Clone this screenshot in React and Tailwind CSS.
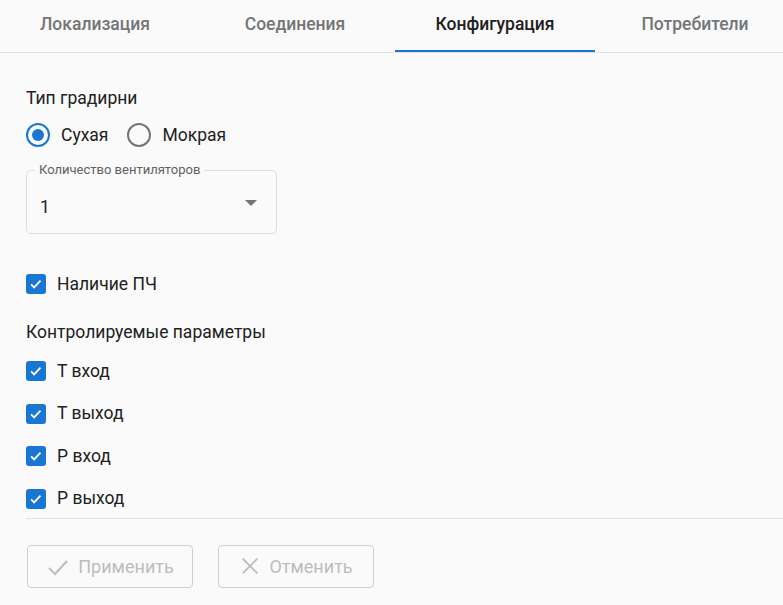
import React, { useState } from 'react';

const tabs = ['Локализация', 'Соединения', 'Конфигурация', 'Потребители'];
const params = ['T вход', 'T выход', 'P вход', 'P выход'];

function CheckBox({ checked, onChange, label }) {
  return (
    <label className="flex items-center h-[22px] cursor-pointer">
      <span
        onClick={onChange}
        className={
          'w-[20px] h-[20px] rounded-[3px] flex items-center justify-center ' +
          (checked ? 'bg-[#1976d2]' : 'border-2 border-[#757575]')
        }
      >
        {checked && (
          <svg viewBox="0 0 24 24" className="w-[18px] h-[18px]" fill="none" stroke="white" strokeWidth="2.4">
            <path d="M5.5 12.5l4 4 8.5-9" />
          </svg>
        )}
      </span>
      <span className="ml-[11px] text-[17.5px] text-[#212121]">{label}</span>
    </label>
  );
}

function Radio({ checked, onClick, label }) {
  return (
    <label className="flex items-center cursor-pointer" onClick={onClick}>
      <span
        className={
          'w-[24px] h-[24px] rounded-full border-2 flex items-center justify-center ' +
          (checked ? 'border-[#1976d2]' : 'border-[#757575]')
        }
      >
        {checked && <span className="w-[12px] h-[12px] rounded-full bg-[#1976d2]" />}
      </span>
      <span className="ml-[11px] text-[17.5px] text-[#212121]">{label}</span>
    </label>
  );
}

export default function App() {
  const [tab, setTab] = useState(2);
  const [wet, setWet] = useState(false);
  const [pch, setPch] = useState(true);
  const [checked, setChecked] = useState([true, true, true, true]);

  return (
    <div className="w-[783px] h-[605px] bg-[#fafafa] overflow-hidden font-['Roboto',sans-serif]">
      {/* tabs */}
      <div className="h-[53px] border-b border-[#e0e0e0] flex -ml-[5px]">
        {tabs.map((t, i) => (
          <button
            key={t}
            onClick={() => setTab(i)}
            className={
              'w-[200px] shrink-0 h-full relative text-[17.5px] font-medium pb-[4px] ' +
              (i === tab ? 'text-[#212121]' : 'text-[#757575]')
            }
          >
            {t}
            {i === tab && <span className="absolute left-0 right-0 bottom-0 h-[2px] bg-[#1976d2]" />}
          </button>
        ))}
      </div>

      <div className="pl-[26px] pt-[33px]">
        <div className="text-[17.5px] text-[#212121] leading-[24px]">Тип градирни</div>
        <div className="flex items-center gap-[19px] mt-[13px] h-[24px]">
          <Radio checked={!wet} onClick={() => setWet(false)} label="Сухая" />
          <Radio checked={wet} onClick={() => setWet(true)} label="Мокрая" />
        </div>

        <div className="relative mt-[23px] w-[251px] h-[64px] border border-[#dcdcdc] rounded-[5px]">
          <span className="absolute -top-[9px] left-[8px] px-[4px] bg-[#fafafa] text-[13px] text-[#616161] leading-[16px]">
            Количество вентиляторов
          </span>
          <div className="flex items-center justify-between h-full pl-[13px] pr-[19px] pt-[10px]">
            <span className="text-[17.5px] text-[#212121]">1</span>
            <svg viewBox="0 0 12 6" className="w-[12px] h-[6px] -mt-[9px]">
              <path d="M0 0h12L6 6z" fill="#757575" />
            </svg>
          </div>
        </div>

        <div className="mt-[39px]">
          <CheckBox checked={pch} onChange={() => setPch(!pch)} label="Наличие ПЧ" />
        </div>

        <div className="mt-[25px] text-[17.5px] text-[#212121] leading-[24px]">Контролируемые параметры</div>

        <div className="flex flex-col gap-[20.5px] mt-[16px]">
          {params.map((p, i) => (
            <CheckBox
              key={p}
              checked={checked[i]}
              onChange={() => setChecked(checked.map((c, j) => (j === i ? !c : c)))}
              label={p}
            />
          ))}
        </div>
      </div>

      <div className="ml-[26px] mt-[8px] border-t border-[#e0e0e0]" />

      <div className="flex gap-[25px] pl-[27px] mt-[26px]">
        <button
          disabled
          className="w-[166px] h-[43px] border border-[#cfcfcf] rounded-[4px] flex items-center justify-center gap-[8px] text-[18px] text-[#bdbdbd]"
        >
          <svg viewBox="0 0 24 24" className="w-[24px] h-[24px]" fill="none" stroke="#bdbdbd" strokeWidth="2">
            <path d="M3 14l6 6 12-13" />
          </svg>
          Применить
        </button>
        <button
          disabled
          className="w-[156px] h-[43px] border border-[#cfcfcf] rounded-[4px] flex items-center justify-center gap-[8px] text-[18px] text-[#bdbdbd]"
        >
          <svg viewBox="0 0 24 24" className="w-[22px] h-[22px]" fill="none" stroke="#bdbdbd" strokeWidth="2">
            <path d="M4 4l16 16M20 4L4 20" />
          </svg>
          Отменить
        </button>
      </div>
    </div>
  );
}
